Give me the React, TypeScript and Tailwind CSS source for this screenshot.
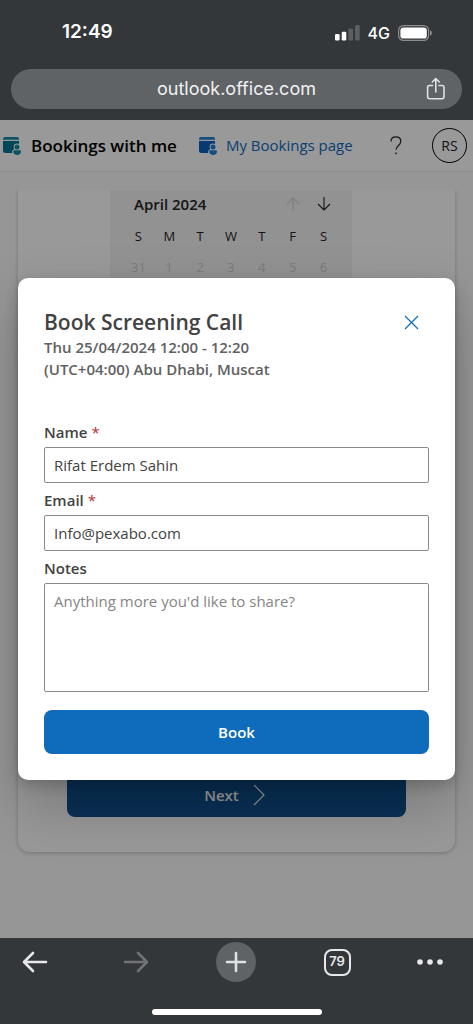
import type { ReactNode } from 'react';

const WEEKDAYS = ['S', 'M', 'T', 'W', 'T', 'F', 'S'];
const FIRST_WEEK = [31, 1, 2, 3, 4, 5, 6];

export default function App() {
  return (
    <div className="flex min-h-screen flex-col bg-[#34373a] font-['Open_Sans','Noto_Sans',sans-serif]">
      <BrowserTop />
      <div className="relative flex flex-1 flex-col bg-[#fafafa]">
        <BookingsHeader />
        <BookingsPage />
        <div className="absolute inset-0 flex items-center overflow-hidden bg-black/40 px-[18px]">
          <BookingDialog />
        </div>
      </div>
      <BrowserToolbar />
    </div>
  );
}

function BrowserTop() {
  return (
    <header className="px-[11px] pb-[11px] font-[Inter,sans-serif] text-white">
      <div className="flex h-[69px] items-center justify-between pr-[30px] pl-[51px] pb-1">
        <span className="text-[19px] font-semibold">12:49</span>
        <div className="flex items-center gap-2">
          <svg width="25" height="16" viewBox="0 0 25 16" fill="#fff" aria-hidden="true">
            <rect x="0" y="9" width="4.6" height="6.5" rx="1.3" />
            <rect x="6.7" y="6.7" width="4.6" height="8.8" rx="1.3" />
            <rect x="13.4" y="3.5" width="4.6" height="12" rx="1.3" fill="#5c5f62" />
            <rect x="20.1" y="0" width="4.6" height="15.5" rx="1.3" fill="#5c5f62" />
          </svg>
          <span className="text-base font-medium">4G</span>
          <svg width="34" height="16" viewBox="0 0 34 16" aria-hidden="true">
            <rect x="0.6" y="0.6" width="30" height="14.8" rx="4.8" fill="none" stroke="#8b8d8f" strokeWidth="1.2" />
            <rect x="2.4" y="2.4" width="26.4" height="11.2" rx="3.2" fill="#fff" />
            <path d="M32 5.3c1.2.4 1.9 1.4 1.9 2.7s-.7 2.300-1.900 2.700z" fill="#8b8d8f" />
          </svg>
        </div>
      </div>
      <div className="flex h-10 items-center rounded-full bg-[#5f6366] px-4">
        <span className="w-5" />
        <span className="flex-1 text-center text-lg leading-6 text-[#f1f2f3]">outlook.office.com</span>
        <button type="button" aria-label="Share" className="w-5">
          <svg width="20" height="24" viewBox="0 0 20 24" fill="none" stroke="#dfe1e4" strokeWidth="1.6" strokeLinecap="round" strokeLinejoin="round">
            <path d="M6.5 8.500H3.600a2 2 0 0 0-2 2V19.500a2.200 2.200 0 0 0 2.200 2.200h12a2.200 2.200 0 0 0 2.200-2.200V10.500a2 2 0 0 0-2-2H13" />
            <path d="M9.800 15V2M6.300 5l3.500-3.400L13.300 5" />
          </svg>
        </button>
      </div>
    </header>
  );
}

function BookingsHeader() {
  return (
    <div className="flex h-[52px] items-center border-b border-[#eeeeee] bg-white pr-[6px] pl-[3px]">
      <BookingsIcon body="#00768f" light="#158ca4" />
      <h1 className="ml-[10px] text-[17px] font-semibold text-black">Bookings with me</h1>
      <a href="#my-bookings" className="ml-[22px] flex items-center gap-[9px] text-[15px] text-[#0f6cbd]">
        <BookingsIcon body="#0b62bc" light="#2680d6" />
        My Bookings page
      </a>
      <button type="button" aria-label="Help" className="ml-auto">
        <svg width="12" height="19" viewBox="0 0 12 19" fill="none" stroke="#242424" strokeWidth="1.2">
          <path d="M1 5.500C1 2.700 3 .9 5.900.9s4.900 1.800 4.900 4.400c0 2-1 3.100-2.500 4.400C6.800 11 6 11.900 6 13.800" />
          <circle cx="6" cy="17.3" r="0.9" fill="#242424" stroke="none" />
        </svg>
      </button>
      <button type="button" className="ml-[30px] size-[35px] rounded-full border border-black text-sm text-[#242424]">
        RS
      </button>
    </div>
  );
}

function BookingsIcon({ body, light }: { body: string; light: string }) {
  return (
    <svg width="18" height="18" viewBox="0 0 18 18" className="shrink-0" aria-hidden="true">
      <path d="M2 0h12a2 2 0 0 1 2 2v.8H0V2a2 2 0 0 1 2-2z" fill={light} />
      <path d="M0 4h16v10a2 2 0 0 1-2 2H2.500A2.500 2.500 0 0 1 0 13.500z" fill={body} />
      <circle cx="14" cy="9.9" r="3.4" fill="#fff" />
      <rect x="9.2" y="12.3" width="9.5" height="6.5" rx="2.5" fill="#fff" />
      <circle cx="14" cy="9.9" r="2.5" fill={light} />
      <path d="M11.500 13.300h5.200c.8 0 1.300.6 1.300 1.300 0 2-1.700 3.400-3.900 3.400s-3.900-1.400-3.900-3.400c0-.7.6-1.300 1.300-1.300z" fill={light} />
    </svg>
  );
}

function BookingsPage() {
  return (
    <main className="mt-[18px] flex flex-1 flex-col overflow-hidden px-[18px] pb-[86px]">
      <section className="flex flex-1 flex-col justify-between rounded-b-xl bg-white px-[49px] pb-[35px] shadow-[0_1px_4px_rgba(0,0,0,0.22)]">
        <div className="ml-[43px] h-64 w-[242px] bg-[#f4f4f4] px-[13px]">
          <div className="flex h-7 items-center justify-between pr-2 pl-[11px]">
            <h2 className="text-[15px] font-semibold text-[#242424]">April 2024</h2>
            <div className="flex gap-[17px]">
              <button type="button" aria-label="Previous month" disabled>
                <svg width="14" height="14" viewBox="0 0 14 14" fill="none" stroke="#d0d0d0" strokeWidth="1.1">
                  <path d="M7 14V1M1 7l6-6 6 6" />
                </svg>
              </button>
              <button type="button" aria-label="Next month">
                <svg width="14" height="14" viewBox="0 0 14 14" fill="none" stroke="#242424" strokeWidth="1.1">
                  <path d="M7 0v13M1 7l6 6 6-6" />
                </svg>
              </button>
            </div>
          </div>
          <table className="w-full table-fixed text-center text-[13px]">
            <thead>
              <tr className="h-[38px]">
                {WEEKDAYS.map((day, i) => (
                  <th key={i} className="font-normal text-[#242424]">{day}</th>
                ))}
              </tr>
            </thead>
            <tbody>
              <tr className="h-6">
                {FIRST_WEEK.map((date) => (
                  <td key={date} className="text-[#cfcfcf]">{date}</td>
                ))}
              </tr>
            </tbody>
          </table>
        </div>
        <button
          type="button"
          className="flex h-11 items-center justify-center gap-[14px] rounded-lg bg-[#0f5090] pr-1 text-[15px] font-semibold text-white"
        >
          Next
          <svg width="12" height="22" viewBox="0 0 12 22" fill="none" stroke="#fff" strokeWidth="1.2">
            <path d="M1 1l10 10L1 21" />
          </svg>
        </button>
      </section>
    </main>
  );
}

function BookingDialog() {
  return (
    <form
      role="dialog"
      aria-labelledby="dialog-title"
      onSubmit={(e) => e.preventDefault()}
      className="w-full rounded-[10px] bg-white px-[26px] pt-[30px] pb-[26px] text-[15px] text-[#424242] shadow-[0_26px_58px_rgba(0,0,0,0.22),0_5px_14px_rgba(0,0,0,0.18)]"
    >
      <div className="flex items-center justify-between">
        <h2 id="dialog-title" className="text-[21px] leading-7 font-semibold">Book Screening Call</h2>
        <button type="button" aria-label="Close" className="mr-[10px]">
          <svg width="15" height="15" viewBox="0 0 15 15" fill="none" stroke="#0f6cbd" strokeWidth="1.2">
            <path d="M1 1l13 13M14 1L1 14" />
          </svg>
        </button>
      </div>
      <p className="mb-[41px] leading-[22px] font-semibold text-[#616161]">
        Thu 25/04/2024 12:00 - 12:20
        <br />
        (UTC+04:00) Abu Dhabi, Muscat
      </p>
      <Field id="name" label="Name" required>
        <input
          id="name"
          defaultValue="Rifat Erdem Sahin"
          className="h-9 w-full rounded-xs border border-[#8a8a8a] px-[9px]"
        />
      </Field>
      <Field id="email" label="Email" required>
        <input
          id="email"
          type="email"
          defaultValue="Info@pexabo.com"
          className="h-9 w-full rounded-xs border border-[#8a8a8a] px-[9px]"
        />
      </Field>
      <Field id="notes" label="Notes">
        <textarea
          id="notes"
          placeholder="Anything more you'd like to share?"
          className="block h-[109px] w-full resize-none rounded-xs border border-[#8a8a8a] px-[9px] py-[6px] leading-[22px] placeholder:text-[#858585]"
        />
      </Field>
      <button type="submit" className="mt-3 h-11 w-full rounded-lg bg-[#0f6cbd] font-semibold text-white">
        Book
      </button>
    </form>
  );
}

interface FieldProps {
  id: string;
  label: string;
  required?: boolean;
  children: ReactNode;
}

function Field({ id, label, required, children }: FieldProps) {
  return (
    <div className="mb-[6px]">
      <label htmlFor={id} className="mb-1 block leading-[22px] font-semibold">
        {label}
        {required && <span className="ml-1 font-normal text-[#bc2f32]">*</span>}
      </label>
      {children}
    </div>
  );
}

function BrowserToolbar() {
  return (
    <footer className="pt-1 pb-[9px] font-[Inter,sans-serif]">
      <nav className="grid grid-cols-[101fr_100fr_101fr_93fr_40px] pr-[23px] pl-[15px]">
        <ToolbarButton label="Back">
          <svg width="26" height="22" viewBox="0 0 26 22" fill="none" stroke="#e6e8eb" strokeWidth="2.6" strokeLinecap="round" strokeLinejoin="round">
            <path d="M24 11H2M11 2l-9 9 9 9" />
          </svg>
        </ToolbarButton>
        <ToolbarButton label="Forward">
          <svg width="26" height="22" viewBox="0 0 26 22" fill="none" stroke="#707275" strokeWidth="2.6" strokeLinecap="round" strokeLinejoin="round">
            <path d="M2 11h22M15 2l9 9-9 9" />
          </svg>
        </ToolbarButton>
        <button type="button" aria-label="New tab" className="flex size-10 items-center justify-center rounded-full bg-[#5f6366]">
          <svg width="22" height="22" viewBox="0 0 22 22" stroke="#dfe1e4" strokeWidth="2.6" strokeLinecap="round">
            <path d="M11 2v18M2 11h18" />
          </svg>
        </button>
        <ToolbarButton label="Tabs">
          <span className="flex size-[27px] items-center justify-center rounded-lg border-2 border-[#e6e8eb] text-[13px] font-semibold text-[#e6e8eb]">
            79
          </span>
        </ToolbarButton>
        <ToolbarButton label="More">
          <svg width="26" height="6" viewBox="0 0 26 6" fill="#e6e8eb">
            <circle cx="3" cy="3" r="2.8" />
            <circle cx="13" cy="3" r="2.8" />
            <circle cx="23" cy="3" r="2.8" />
          </svg>
        </ToolbarButton>
      </nav>
      <div className="mx-auto mt-[27px] h-[6px] w-[170px] rounded-full bg-white" />
    </footer>
  );
}

function ToolbarButton({ label, children }: { label: string; children: ReactNode }) {
  return (
    <button type="button" aria-label={label} className="flex size-10 items-center justify-center">
      {children}
    </button>
  );
}
